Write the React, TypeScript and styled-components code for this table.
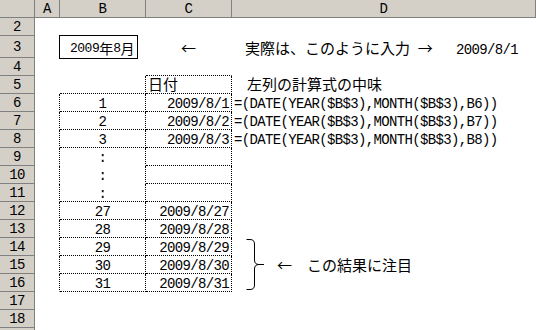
import type { ReactNode } from 'react';
import styled, { createGlobalStyle } from 'styled-components';

type Align = 'left' | 'center' | 'right';

const GlobalStyle = createGlobalStyle`
  html,
  body {
    margin: 0;
    padding: 0;
    background: #fff;
  }
`;

const Sheet = styled.div`
  display: grid;
  grid-template-columns: 35px 25px 86px 86px 304px;
  grid-template-rows: 18px 18px 22px repeat(16, 18px);
  width: 536px;
  height: 330px;
  overflow: hidden;
  font-family: 'Liberation Mono', 'Noto Sans CJK JP', monospace;
  font-size: 14px;
  letter-spacing: -0.65px;
  color: #000;
`;

const Head = styled.div`
  box-sizing: border-box;
  display: flex;
  align-items: center;
  justify-content: center;
  background: #d4d0c8;
  border-right: 1px solid #808080;
  border-bottom: 1px solid #808080;
  line-height: 1;
`;

const CellBox = styled.div<{ $align?: Align; $right?: boolean; $bottom?: boolean }>`
  box-sizing: border-box;
  min-width: 0;
  display: flex;
  align-items: flex-end;
  justify-content: ${({ $align }) =>
    $align === 'right' ? 'flex-end' : $align === 'center' ? 'center' : 'flex-start'};
  padding: 0 2px;
  border-right: 1px ${({ $right }) => ($right ? 'dotted #000' : 'solid transparent')};
  border-bottom: 1px ${({ $bottom }) => ($bottom ? 'dotted #000' : 'solid transparent')};
`;

const Text = styled.span`
  display: block;
  white-space: pre;
  line-height: 14px;
`;

const Jp = styled.span`
  font-family: 'Noto Sans CJK JP', sans-serif;
  font-size: 15px;
  letter-spacing: 0;
`;

const Lead = styled(Jp)<{ $indent: number }>`
  margin-left: ${({ $indent }) => $indent}px;
`;

// B3: the month input sits in a framed box
const BoxCell = styled(CellBox)`
  padding: 0;
  align-items: flex-start;
`;

const DateBox = styled.div`
  box-sizing: border-box;
  width: 79px;
  height: 24px;
  margin: -1px 0 0 -1px;
  padding: 2px 0 0 10px;
  display: flex;
  align-items: center;
  border: 1px solid #000;
  font-size: 13px;
  letter-spacing: -0.5px;
  white-space: pre;

  ${Jp} {
    font-size: 14px;
  }
`;

// D14:D16 holds the brace and its note
const BraceCell = styled(CellBox)`
  grid-row: span 3;
  align-items: center;
  padding-left: 14px;
`;

const BraceSvg = styled.svg`
  display: block;
  flex: none;
`;

const Note = styled(Jp)`
  margin-left: 11px;
  line-height: 16px;
  white-space: pre;
`;

type CellProps = {
  children?: ReactNode;
  $align?: Align;
  $right?: boolean;
  $bottom?: boolean;
};

const Cell = ({ children, ...rest }: CellProps) => (
  <CellBox {...rest}>{children !== undefined && <Text>{children}</Text>}</CellBox>
);

const Brace = () => (
  <BraceSvg width="20" height="52" viewBox="0 0 20 52">
    <path
      d="M0.5 0.5 H4 Q8.5 0.5 8.5 5 V21 Q8.5 25.5 13 25.5 H18 M13 25.5 Q8.5 25.5 8.5 30 V46 Q8.5 50.5 4 50.5 H0.5"
      fill="none"
      stroke="#000"
      strokeWidth="1"
    />
  </BraceSvg>
);

const formula = (ref: string) => `=(DATE(YEAR($B$3),MONTH($B$3),${ref}))`;

const firstDays = [
  { row: 6, day: '1' },
  { row: 7, day: '2' },
  { row: 8, day: '3' },
];

const lastDays = [
  { row: 12, day: '27' },
  { row: 13, day: '28' },
];

const noted = [
  { row: 14, day: '29' },
  { row: 15, day: '30' },
  { row: 16, day: '31' },
];

const Blank = ({ row }: { row?: number }) => (
  <>
    <Head>{row}</Head>
    <Cell />
    <Cell />
    <Cell />
    <Cell />
  </>
);

type RowProps = {
  row: number;
  day: string;
  merged?: boolean;
  empty?: boolean;
  children?: ReactNode;
};

// one day of the table: number in B, date in C
function Row({ row, day, merged, empty, children }: RowProps) {
  return (
    <>
      <Head>{row}</Head>
      <Cell $right />
      <Cell $align="center" $right $bottom={!merged}>
        {day}
      </Cell>
      <Cell $align="right" $right $bottom>
        {empty ? undefined : `2009/8/${day}`}
      </Cell>
      {children}
    </>
  );
}

const App = () => (
  <>
    <GlobalStyle />
    <Sheet>
      <Head />
      {['A', 'B', 'C', 'D'].map((col) => (
        <Head key={col}>{col}</Head>
      ))}

      <Blank row={2} />

      <Head>3</Head>
      <Cell />
      <BoxCell>
        <DateBox>
          2009<Jp>年</Jp>8<Jp>月</Jp>
        </DateBox>
      </BoxCell>
      <Cell $align="center">
        <Jp>←</Jp>
      </Cell>
      <Cell>
        <Lead $indent={11}>実際は、このように入力</Lead>
        {' '}
        <Jp>→</Jp>
        {'   2009/8/1'}
      </Cell>

      <Head>4</Head>
      <Cell />
      <Cell />
      <Cell $bottom />
      <Cell />

      <Head>5</Head>
      <Cell />
      <Cell $right $bottom />
      <Cell $right $bottom>
        <Jp>日付</Jp>
      </Cell>
      <Cell>
        <Lead $indent={13}>左列の計算式の中味</Lead>
      </Cell>

      {firstDays.map(({ row, day }) => (
        <Row key={row} row={row} day={day}>
          <Cell>{formula(`B${row}`)}</Cell>
        </Row>
      ))}

      {[9, 10, 11].map((row) => (
        <Row key={row} row={row} day=":" merged={row !== 11} empty>
          <Cell />
        </Row>
      ))}

      {lastDays.map(({ row, day }) => (
        <Row key={row} row={row} day={day}>
          <Cell />
        </Row>
      ))}

      {noted.map(({ row, day }) => (
        <Row key={row} row={row} day={day}>
          {row === 14 && (
            <BraceCell>
              <Brace />
              <Note>←　この結果に注目</Note>
            </BraceCell>
          )}
        </Row>
      ))}

      <Blank row={17} />
      <Blank row={18} />
      <Blank />
    </Sheet>
  </>
);

export default App;
